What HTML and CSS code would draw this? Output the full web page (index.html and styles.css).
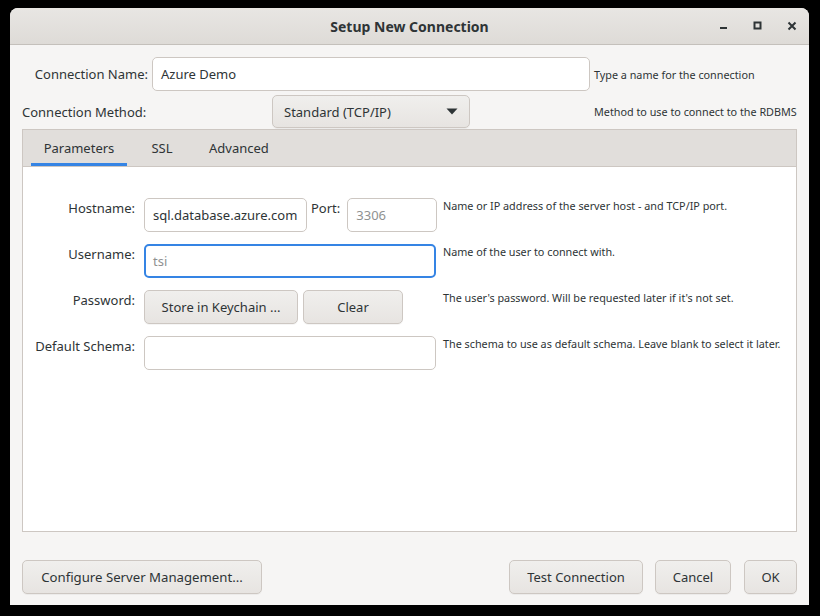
FILE: index.html
```html
<!DOCTYPE html>
<html>
<head>
<meta charset="utf-8">
<link rel="stylesheet" href="styles.css">
</head>
<body>
<div class="window">
  <div class="titlebar">
    <div class="title">Setup New Connection</div>
    <div class="controls">
      <span class="ctl"><svg width="10" height="10" viewBox="0 0 10 10"><rect x="1" y="6" width="7" height="2" fill="#2e3436"/></svg></span>
      <span class="ctl"><svg width="10" height="10" viewBox="0 0 10 10"><rect x="1.5" y="1.5" width="6" height="6" fill="none" stroke="#2e3436" stroke-width="2"/></svg></span>
      <span class="ctl"><svg width="10" height="10" viewBox="0 0 10 10"><path d="M1.5 1.5 L8.5 8.5 M8.5 1.5 L1.5 8.5" stroke="#2e3436" stroke-width="2"/></svg></span>
    </div>
  </div>
  <div class="content">
    <div class="top-grid">
      <label class="lbl-right">Connection Name:</label>
      <div class="entry">Azure Demo</div>
      <div class="hint">Type a name for the connection</div>

      <label class="lbl-left">Connection Method:</label>
      <div class="combo-wrap">
        <div class="button combo"><span>Standard (TCP/IP)</span>
          <svg width="12" height="7" viewBox="0 0 12 7"><path d="M0.5 0.5 L11.5 0.5 L6 6.5 Z" fill="#2e3436"/></svg>
        </div>
      </div>
      <div class="hint">Method to use to connect to the RDBMS</div>
    </div>

    <div class="notebook">
      <div class="tabs">
        <div class="tab active">Parameters</div>
        <div class="tab">SSL</div>
        <div class="tab">Advanced</div>
      </div>
      <div class="page">
        <div class="form">
          <label class="flabel">Hostname:</label>
          <div class="host-row">
            <div class="entry host">sql.database.azure.com</div>
            <label class="flabel port-lbl">Port:</label>
            <div class="entry port placeholder">3306</div>
          </div>
          <div class="fhint">Name or IP address of the server host - and TCP/IP port.</div>

          <label class="flabel">Username:</label>
          <div class="entry wide focused placeholder">tsi</div>
          <div class="fhint">Name of the user to connect with.</div>

          <label class="flabel">Password:</label>
          <div class="pw-row">
            <div class="button keychain">Store in Keychain ...</div>
            <div class="button clear">Clear</div>
          </div>
          <div class="fhint">The user's password. Will be requested later if it's not set.</div>

          <label class="flabel">Default Schema:</label>
          <div class="entry wide"></div>
          <div class="fhint">The schema to use as default schema. Leave blank to select it later.</div>
        </div>
      </div>
    </div>

    <div class="actions">
      <div class="button configure">Configure Server Management...</div>
      <div class="spacer"></div>
      <div class="button test">Test Connection</div>
      <div class="button cancel">Cancel</div>
      <div class="button ok">OK</div>
    </div>
  </div>
</div>
</body>
</html>
```

FILE: styles.css
```css
* { box-sizing: border-box; }
html, body { margin: 0; padding: 0; background: #000; }
body {
  width: 820px;
  height: 616px;
  overflow: hidden;
  font-family: "Noto Sans", "Open Sans", sans-serif;
  font-size: 13px;
  color: #2e3436;
  padding: 8px 11px 0 10px;
}
.window {
  width: 799px;
  height: 597px;
  background: #f6f5f4;
  border-radius: 8px 8px 0 0;
  display: flex;
  flex-direction: column;
  overflow: hidden;
}
.titlebar {
  height: 37px;
  flex: none;
  background: linear-gradient(#e8e6e3, #dedbd7);
  border-bottom: 1px solid #c4c0bb;
  display: flex;
  align-items: center;
  justify-content: center;
  position: relative;
}
.title {
  font-weight: bold;
  font-size: 14px;
  color: #2e3436;
  padding-top: 1px;
}
.controls {
  position: absolute;
  right: 12px;
  top: 0;
  height: 36px;
  display: flex;
  align-items: center;
  gap: 24px;
}
.ctl { width: 10px; height: 10px; display: block; }
.ctl svg { display: block; }
.content {
  flex: 1;
  display: flex;
  flex-direction: column;
  padding: 12px 12px 12px 12px;
}
.top-grid {
  display: grid;
  grid-template-columns: 126px 438px 1fr;
  column-gap: 4px;
  row-gap: 4px;
  align-items: center;
}
.lbl-right { text-align: right; }
.lbl-left { text-align: left; white-space: nowrap; }
.hint { font-size: 10.8px; white-space: nowrap; }
.entry {
  height: 34px;
  background: #fff;
  border: 1px solid #cdc7c2;
  border-radius: 5px;
  padding: 0 8px;
  display: flex;
  align-items: center;
  white-space: nowrap;
  overflow: hidden;
}
.placeholder { color: #8f9191; }
.focused { border: 2px solid #3584e4; padding-left: 7px; }
.button {
  height: 33px;
  background: linear-gradient(#f0efed, #e7e4e1);
  border: 1px solid #cdc7c2;
  border-radius: 5px;
  display: flex;
  align-items: center;
  justify-content: center;
  padding: 0 17px;
  white-space: nowrap;
  box-shadow: 0 1px 0 rgba(0,0,0,0.04);
}
.combo-wrap { display: flex; justify-content: center; }
.combo {
  width: 198px;
  justify-content: space-between;
  padding: 0 11px 0 11px;
}
.notebook {
  margin-top: 1px;
  height: 403px;
  border: 1px solid #cdc7c2;
  display: flex;
  flex-direction: column;
  background: #fff;
}
.tabs {
  height: 37px;
  flex: none;
  background: #e1dedb;
  border-bottom: 1px solid #cdc7c2;
  display: flex;
  padding-left: 8px;
}
.tab {
  padding: 0 12px;
  display: flex;
  align-items: center;
  margin-right: 1px;
  color: #2e3436;
}
.tab:nth-child(1) { width: 96px; justify-content: center; }
.tab:nth-child(2) { width: 68px; justify-content: center; margin-right: 0; }
.tab:nth-child(3) { padding-left: 13px; }
.tab.active { box-shadow: inset 0 -3px 0 #3584e4; }
.page { flex: 1; padding: 31px 0 0 0; }
.form {
  display: grid;
  grid-template-columns: 121px 299px 1fr;
  row-gap: 12px;
  align-items: start;
}
.flabel {
  text-align: right;
  padding-top: 1px;
  line-height: 18px;
  white-space: nowrap;
}
.form > .flabel { padding-right: 9px; }
.host-row { display: flex; align-items: flex-start; }
.host { width: 163px; }
.port-lbl { margin-left: 4px; margin-right: 7px; }
.port { width: 90px; }
.wide { width: 292px; }
.fhint { font-size: 10.8px; line-height: 16px; white-space: nowrap; }
.pw-row { display: flex; gap: 5px; }
.keychain { width: 154px; height: 34px; padding: 0; }
.clear { width: 100px; height: 34px; padding: 0; }
.actions {
  margin-top: 28px;
  display: flex;
}
.actions .button { height: 34px; padding: 0; }
.spacer { flex: 1; }
.configure { width: 240px; font-size: 13.2px; }
.test { width: 134px; margin-right: 12px; }
.cancel { width: 76px; margin-right: 13px; }
.ok { width: 53px; }
```
